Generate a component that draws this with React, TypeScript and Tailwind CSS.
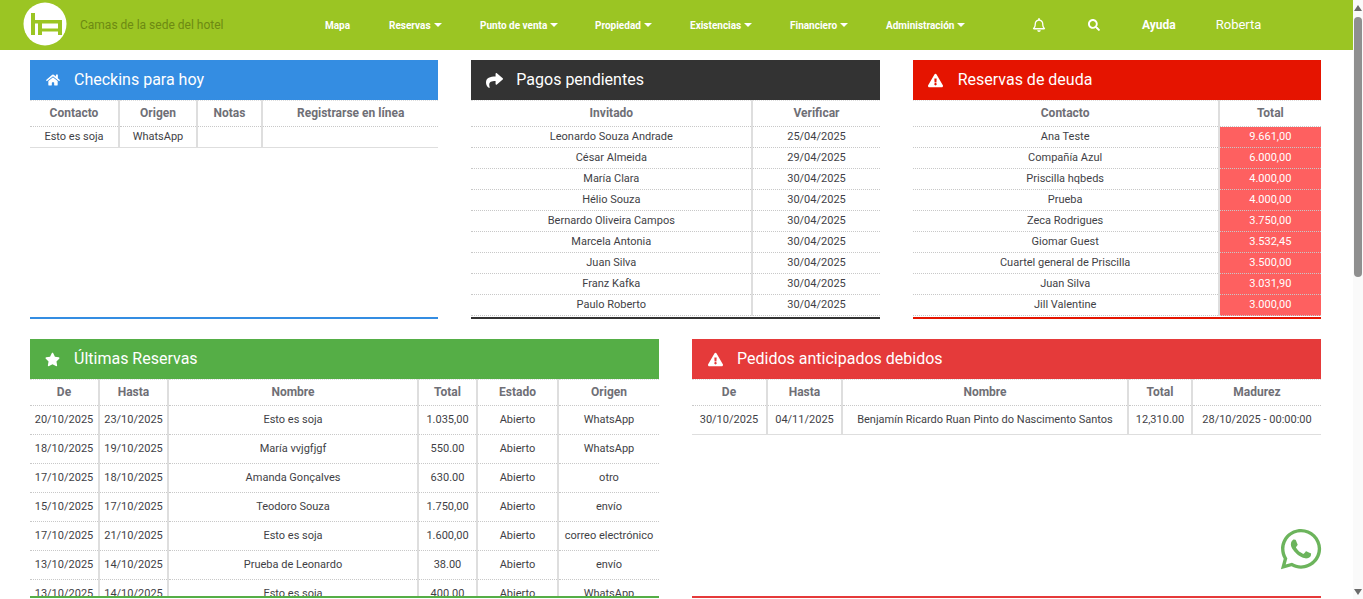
import type { ReactNode } from 'react';
import { FaExclamationTriangle, FaHome, FaRegBell, FaSearch, FaShare, FaStar, FaWhatsapp } from 'react-icons/fa';

type Col = { label: string; width?: number };

const navItems = [
  { label: 'Mapa', width: 64, caret: false },
  { label: 'Reservas', width: 91, caret: true },
  { label: 'Punto de venta', width: 115, caret: true },
  { label: 'Propiedad', width: 95, caret: true },
  { label: 'Existencias', width: 100, caret: true },
  { label: 'Financiero', width: 96, caret: true },
  { label: 'Administración', width: 110, caret: true },
];

const pagos = [
  ['Leonardo Souza Andrade', '25/04/2025'],
  ['César Almeida', '29/04/2025'],
  ['María Clara', '30/04/2025'],
  ['Hélio Souza', '30/04/2025'],
  ['Bernardo Oliveira Campos', '30/04/2025'],
  ['Marcela Antonia', '30/04/2025'],
  ['Juan Silva', '30/04/2025'],
  ['Franz Kafka', '30/04/2025'],
  ['Paulo Roberto', '30/04/2025'],
];

const deudas = [
  ['Ana Teste', '9.661,00'],
  ['Compañía Azul', '6.000,00'],
  ['Priscilla hqbeds', '4.000,00'],
  ['Prueba', '4.000,00'],
  ['Zeca Rodrigues', '3.750,00'],
  ['Giomar Guest', '3.532,45'],
  ['Cuartel general de Priscilla', '3.500,00'],
  ['Juan Silva', '3.031,90'],
  ['Jill Valentine', '3.000,00'],
];

const reservas = [
  ['20/10/2025', '23/10/2025', 'Esto es soja', '1.035,00', 'Abierto', 'WhatsApp'],
  ['18/10/2025', '19/10/2025', 'María vvjgfjgf', '550.00', 'Abierto', 'WhatsApp'],
  ['17/10/2025', '18/10/2025', 'Amanda Gonçalves', '630.00', 'Abierto', 'otro'],
  ['15/10/2025', '17/10/2025', 'Teodoro Souza', '1.750,00', 'Abierto', 'envío'],
  ['17/10/2025', '21/10/2025', 'Esto es soja', '1.600,00', 'Abierto', 'correo electrónico'],
  ['13/10/2025', '14/10/2025', 'Prueba de Leonardo', '38.00', 'Abierto', 'envío'],
  ['13/10/2025', '14/10/2025', 'Esto es soja', '400.00', 'Abierto', 'WhatsApp'],
];

function Panel({ title, icon, head, edge, iconBox = 'w-11', children }: { title: string; icon: ReactNode; head: string; edge: string; iconBox?: string; children: ReactNode }) {
  return (
    <section className={`h-[259px] flex flex-col border-b-2 min-w-0 ${edge}`}>
      <div className={`h-10 shrink-0 flex items-center text-white text-[16px] ${head}`}>
        <span className={`flex justify-center pl-[1px] ${iconBox}`}>{icon}</span>
        <span>{title}</span>
      </div>
      <div className="flex-1 min-h-0 overflow-hidden">{children}</div>
    </section>
  );
}

function DataTable({ cols, rows, rowHeight, hot, lastSolid }: { cols: Col[]; rows: string[][]; rowHeight: string; hot?: number; lastSolid?: boolean }) {
  return (
    <table className="w-full table-fixed border-collapse text-[11px] text-[#3f3f46]">
      <colgroup>
        {cols.map((c) => (
          <col key={c.label} style={{ width: c.width }} />
        ))}
      </colgroup>
      <thead>
        <tr className="h-[26px] border-t border-t-[#dedede] border-b border-dotted border-b-[#c8c8c8]">
          {cols.map((c) => (
            <th key={c.label} className="text-[12px] font-bold text-[#6f6f76] border-l-2 first:border-l-0 border-l-[#dedede] p-0 pb-[2px]">
              {c.label}
            </th>
          ))}
        </tr>
      </thead>
      <tbody>
        {rows.map((r, i) => (
          <tr key={i} className={`${rowHeight} border-b ${lastSolid ? 'border-solid border-[#dedede]' : 'border-dotted border-[#c8c8c8]'}`}>
            {r.map((v, j) => (
              <td
                key={j}
                className={`p-0 text-center whitespace-nowrap border-l-2 first:border-l-0 border-l-[#dedede] ${hot === j ? 'bg-[#fe6060] text-white' : ''}`}
              >
                {v}
              </td>
            ))}
          </tr>
        ))}
      </tbody>
    </table>
  );
}

export default function App() {
  return (
    <div className="h-screen flex overflow-hidden bg-white font-['Roboto',sans-serif]">
      <div className="flex-1 min-w-0 flex flex-col relative">
        {/* Top bar */}
        <header className="h-[50px] shrink-0 bg-[#9bc523] flex items-center">
          <svg className="ml-[23px] mt-[-2px] shrink-0" width="44" height="44" viewBox="0 0 44 44">
            <circle cx="22" cy="22" r="21.5" fill="#fff" />
            <path d="M8 11h4v7h27v15h-4V21.5H19V26.500h16v3H19V33h-4V21.500h-3V33H8z" fill="#9bc523" />
          </svg>
          <span className="ml-[13px] w-[245px] shrink-0 text-[12px] text-[#6d8a12]">Camas de la sede del hotel</span>
          <nav className="flex items-center text-white text-[10px] font-bold">
            {navItems.map((n) => (
              <span key={n.label} className="shrink-0 flex items-center gap-[3px]" style={{ width: n.width }}>
                {n.label}
                {n.caret && <span className="inline-block border-x-[4px] border-x-transparent border-t-[4px] border-t-white" />}
              </span>
            ))}
          </nav>
          <FaRegBell className="ml-[36px] text-white text-[14px] shrink-0" />
          <FaSearch className="ml-[42px] text-white text-[12px] shrink-0" />
          <span className="ml-[42px] text-white text-[12px] font-bold">Ayuda</span>
          <span className="ml-[40px] text-white text-[13px]">Roberta</span>
        </header>

        {/* Panels */}
        <main className="flex-1 min-h-0 overflow-hidden pt-[10px] pl-[30px] pr-[32px]">
          <div className="grid grid-cols-3 gap-x-[33px]">
            <Panel title="Checkins para hoy" icon={<FaHome className="text-[14px]" />} head="bg-[#348de2]" edge="border-[#348de2]">
              <DataTable
                cols={[{ label: 'Contacto', width: 89 }, { label: 'Origen', width: 78 }, { label: 'Notas', width: 65 }, { label: 'Registrarse en línea' }]}
                rows={[['Esto es soja', 'WhatsApp', '', '']]}
                rowHeight="h-[21px]"
                lastSolid
              />
            </Panel>
            <Panel title="Pagos pendientes" iconBox="w-[45px]" icon={<FaShare className="text-[17px]" />} head="bg-[#333333]" edge="border-[#333333]">
              <DataTable cols={[{ label: 'Invitado', width: 281 }, { label: 'Verificar' }]} rows={pagos} rowHeight="h-[21px]" />
            </Panel>
            <Panel title="Reservas de deuda" iconBox="w-[45px]" icon={<FaExclamationTriangle className="text-[15px]" />} head="bg-[#e51400]" edge="border-[#e51400]">
              <DataTable cols={[{ label: 'Contacto', width: 306 }, { label: 'Total' }]} rows={deudas} rowHeight="h-[21px]" hot={1} />
            </Panel>
          </div>
          <div className="grid grid-cols-2 gap-x-[33px] mt-5">
            <Panel title="Últimas Reservas" icon={<FaStar className="text-[15px]" />} head="bg-[#55ae46]" edge="border-[#55ae46]">
              <DataTable
                cols={[
                  { label: 'De', width: 69 },
                  { label: 'Hasta', width: 69 },
                  { label: 'Nombre', width: 250 },
                  { label: 'Total', width: 59 },
                  { label: 'Estado', width: 81 },
                  { label: 'Origen' },
                ]}
                rows={reservas}
                rowHeight="h-[29px]"
              />
            </Panel>
            <Panel title="Pedidos anticipados debidos" iconBox="w-[45px]" icon={<FaExclamationTriangle className="text-[15px]" />} head="bg-[#e53a3a]" edge="border-[#e53a3a]">
              <DataTable
                cols={[
                  { label: 'De', width: 75 },
                  { label: 'Hasta', width: 75 },
                  { label: 'Nombre', width: 286 },
                  { label: 'Total', width: 64 },
                  { label: 'Madurez' },
                ]}
                rows={[['30/10/2025', '04/11/2025', 'Benjamín Ricardo Ruan Pinto do Nascimento Santos', '12,310.00', '28/10/2025 - 00:00:00']]}
                rowHeight="h-[29px]"
                lastSolid
              />
            </Panel>
          </div>
        </main>

        <FaWhatsapp className="absolute left-[1278px] top-[526px] text-[#6cb45c] text-[46px]" />
      </div>

      {/* Scrollbar */}
      <div className="w-[10px] shrink-0 bg-[#fafafa] flex flex-col items-center">
        <span className="mt-[5px] border-x-[4px] border-x-transparent border-b-[6px] border-b-[#6b6b6b]" />
        <span className="mt-[6px] w-2 h-[260px] rounded-[4px] bg-[#8f8f8f]" />
        <span className="mt-auto mb-[4px] border-x-[4px] border-x-transparent border-t-[6px] border-t-[#6b6b6b]" />
      </div>
    </div>
  );
}
